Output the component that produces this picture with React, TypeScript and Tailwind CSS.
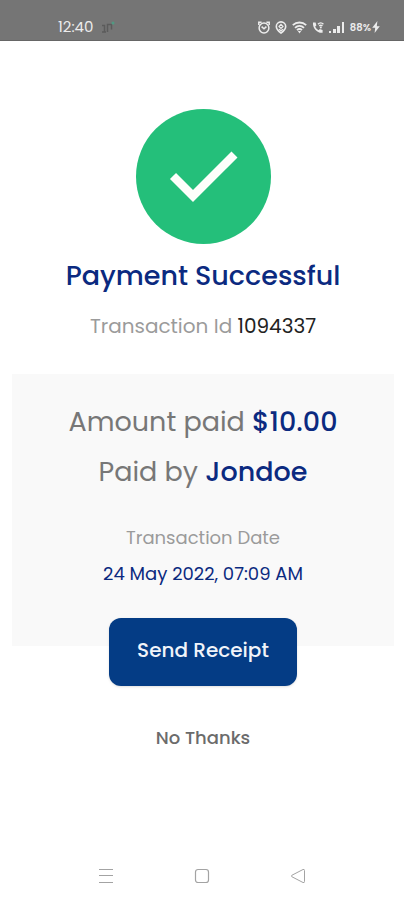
import type { ReactNode } from 'react';

function AlarmIcon() {
  return (
    <svg width="12" height="13" viewBox="0 0 12 13" fill="none" stroke="currentColor" strokeWidth="1.5">
      <path d="M0.8 4V1.2H3.6M11.2 4V1.2H8.4" />
      <circle cx="6" cy="7" r="4.9" />
      <path d="M3.6 5.6L6 7.8L8.4 5.6" />
    </svg>
  );
}

function PinIcon() {
  return (
    <svg width="12" height="13" viewBox="0 0 12 13" fill="none" stroke="currentColor" strokeWidth="1.6">
      <path d="M6 12C3.6 10.2 1.3 7.9 1.3 5.4a4.7 4.5 0 0 1 9.4 0C10.7 7.9 8.4 10.2 6 12Z" />
      <path d="M6 3.4L8 5.4L6 7.4L4 5.4Z" strokeWidth="1.2" />
      <path d="M4 8.2L6 9.8L8 8.2" strokeWidth="1.2" />
    </svg>
  );
}

function WifiIcon() {
  return (
    <svg width="15" height="13" viewBox="0 0 15 13" fill="none" stroke="currentColor" strokeWidth="1.8">
      <path d="M0.8 4.2C4.6 0.6 10.4 0.6 14.2 4.2" />
      <path d="M3 6.8C5.6 4.4 9.4 4.4 12 6.8" />
      <path d="M5 9.2C6.4 7.9 8.6 7.9 10 9.2" />
      <path d="M5.8 10H9.2L7.5 12.4Z" fill="currentColor" stroke="none" />
    </svg>
  );
}

function CallIcon() {
  return (
    <svg width="12" height="13" viewBox="0 0 12 13" fill="none" stroke="currentColor">
      <path
        d="M1 1.4H3.6L4.4 4.4L3.2 5.6C3.9 7.4 5.1 8.5 6.6 9.3L7.8 8.1L10.6 9V11.8C5.4 12.4 0.4 7.2 1 1.4Z"
        fill="currentColor"
        stroke="none"
      />
      <path d="M6 3.2C7.6 1.4 9.8 1.4 11.4 3.2M7.2 5C8.2 4 9.4 4 10.4 5" strokeWidth="1.4" />
      <circle cx="8.8" cy="6.4" r="1" fill="currentColor" stroke="none" />
    </svg>
  );
}

function SignalIcon() {
  return (
    <svg width="16" height="13" viewBox="0 0 16 13" fill="currentColor">
      <rect x="0" y="10" width="2" height="2" />
      <rect x="4" y="8" width="3" height="4" />
      <rect x="8" y="5" width="3" height="7" />
      <rect x="13" y="1" width="2" height="11" />
    </svg>
  );
}

function BoltIcon() {
  return (
    <svg width="8" height="12" viewBox="0 0 8 12" fill="currentColor">
      <path d="M5.4 0L0.2 6.8H3.2L2.6 12L7.8 5.2H4.8Z" />
    </svg>
  );
}

function NotificationIcon() {
  return (
    <svg width="14" height="14" viewBox="0 0 14 14" fill="none">
      <path d="M1 5.5H3.5V12M1 12H5M6.5 12V4.5H10.5V9.5" stroke="#5b5b5b" strokeWidth="1.5" />
      <circle cx="12" cy="3" r="1.5" fill="#4f9a82" />
    </svg>
  );
}

function StatusBar() {
  return (
    <header className="flex h-[41px] items-center justify-between border-b border-[#666666] bg-[#757575] pt-3.5 pr-6 pl-[58px] text-[#ececec]">
      <div className="flex items-center gap-2">
        <span className="text-[15px]">12:40</span>
        <NotificationIcon />
      </div>
      <div className="flex items-center gap-[5px]">
        <AlarmIcon />
        <PinIcon />
        <WifiIcon />
        <CallIcon />
        <SignalIcon />
        <div className="flex items-center gap-px">
          <span className="text-[10px] font-semibold">88%</span>
          <BoltIcon />
        </div>
      </div>
    </header>
  );
}

function SuccessBadge() {
  return (
    <svg width="135" height="135" viewBox="0 0 135 135" role="img" aria-label="Success">
      <circle cx="67.5" cy="67.5" r="67.5" fill="#24bf7a" />
      <path d="M37 67L57 87L98.5 45.5" fill="none" stroke="#fdfffb" strokeWidth="8.5" />
    </svg>
  );
}

function NavButton({ label, children }: { label: string; children: ReactNode }) {
  return (
    <button type="button" aria-label={label} className="flex h-12 flex-1 items-center justify-center text-[#a3a3a3]">
      {children}
    </button>
  );
}

function NavBar() {
  return (
    <nav className="mx-auto mt-auto flex w-full max-w-md px-[58px]">
      <NavButton label="Recent apps">
        <svg width="16" height="16" viewBox="0 0 16 16" fill="none" stroke="currentColor">
          <path d="M1 1.5H15M1 7.5H15M1 14.5H15" />
        </svg>
      </NavButton>
      <NavButton label="Home">
        <svg width="16" height="16" viewBox="0 0 16 16" fill="none" stroke="currentColor" strokeWidth="1.2">
          <rect x="1.5" y="1.5" width="13" height="13" rx="2.5" />
        </svg>
      </NavButton>
      <NavButton label="Back">
        <svg width="16" height="16" viewBox="0 0 16 16" fill="none" stroke="currentColor" strokeLinejoin="round">
          <path d="M1.8 7.3L13 1.5Q14.5 1 14.5 2.5V13.5Q14.5 15 13 14.5L1.8 8.7Q0.8 8 1.8 7.3Z" />
        </svg>
      </NavButton>
    </nav>
  );
}

export default function App() {
  return (
    <div className="flex min-h-screen flex-col bg-white font-['Poppins',Inter,sans-serif]">
      <StatusBar />

      <main className="flex flex-col items-center pt-[68px] pr-2.5 pl-3 text-center">
        <SuccessBadge />
        <h1 className="mt-3 text-[27px] leading-10 font-medium text-[#0b2a80]">Payment Successful</h1>
        <p className="mt-3.5 text-xl leading-8 text-[#9b9b9b]">
          Transaction Id <span className="text-[#222222]">1094337</span>
        </p>

        {/* Payment details */}
        <section className="mt-8 w-full bg-[#f9f9f9] pt-7 pb-14">
          <p className="text-[27px] leading-10 text-[#777777]">
            Amount paid <span className="font-medium text-[#0b2a80]">$10.00</span>
          </p>
          <p className="mt-2.5 text-[27px] leading-10 text-[#777777]">
            Paid by <span className="font-medium text-[#0b2a80]">Jondoe</span>
          </p>
          <p className="mt-[30px] text-lg leading-8 text-[#9b9b9b]">Transaction Date</p>
          <p className="mt-1 text-lg leading-8 text-[#0b2a80]">24 May 2022, 07:09 AM</p>
        </section>

        {/* Sits over the bottom edge of the details panel */}
        <button
          type="button"
          className="-mt-7 rounded-xl bg-[#043c85] px-7 pt-4 pb-5 text-xl leading-8 font-medium text-[#f1f4fa] shadow-sm"
        >
          Send Receipt
        </button>
        <button type="button" className="mt-9 text-lg leading-8 font-medium text-[#6b6b6b]">
          No Thanks
        </button>
      </main>

      <NavBar />
    </div>
  );
}
